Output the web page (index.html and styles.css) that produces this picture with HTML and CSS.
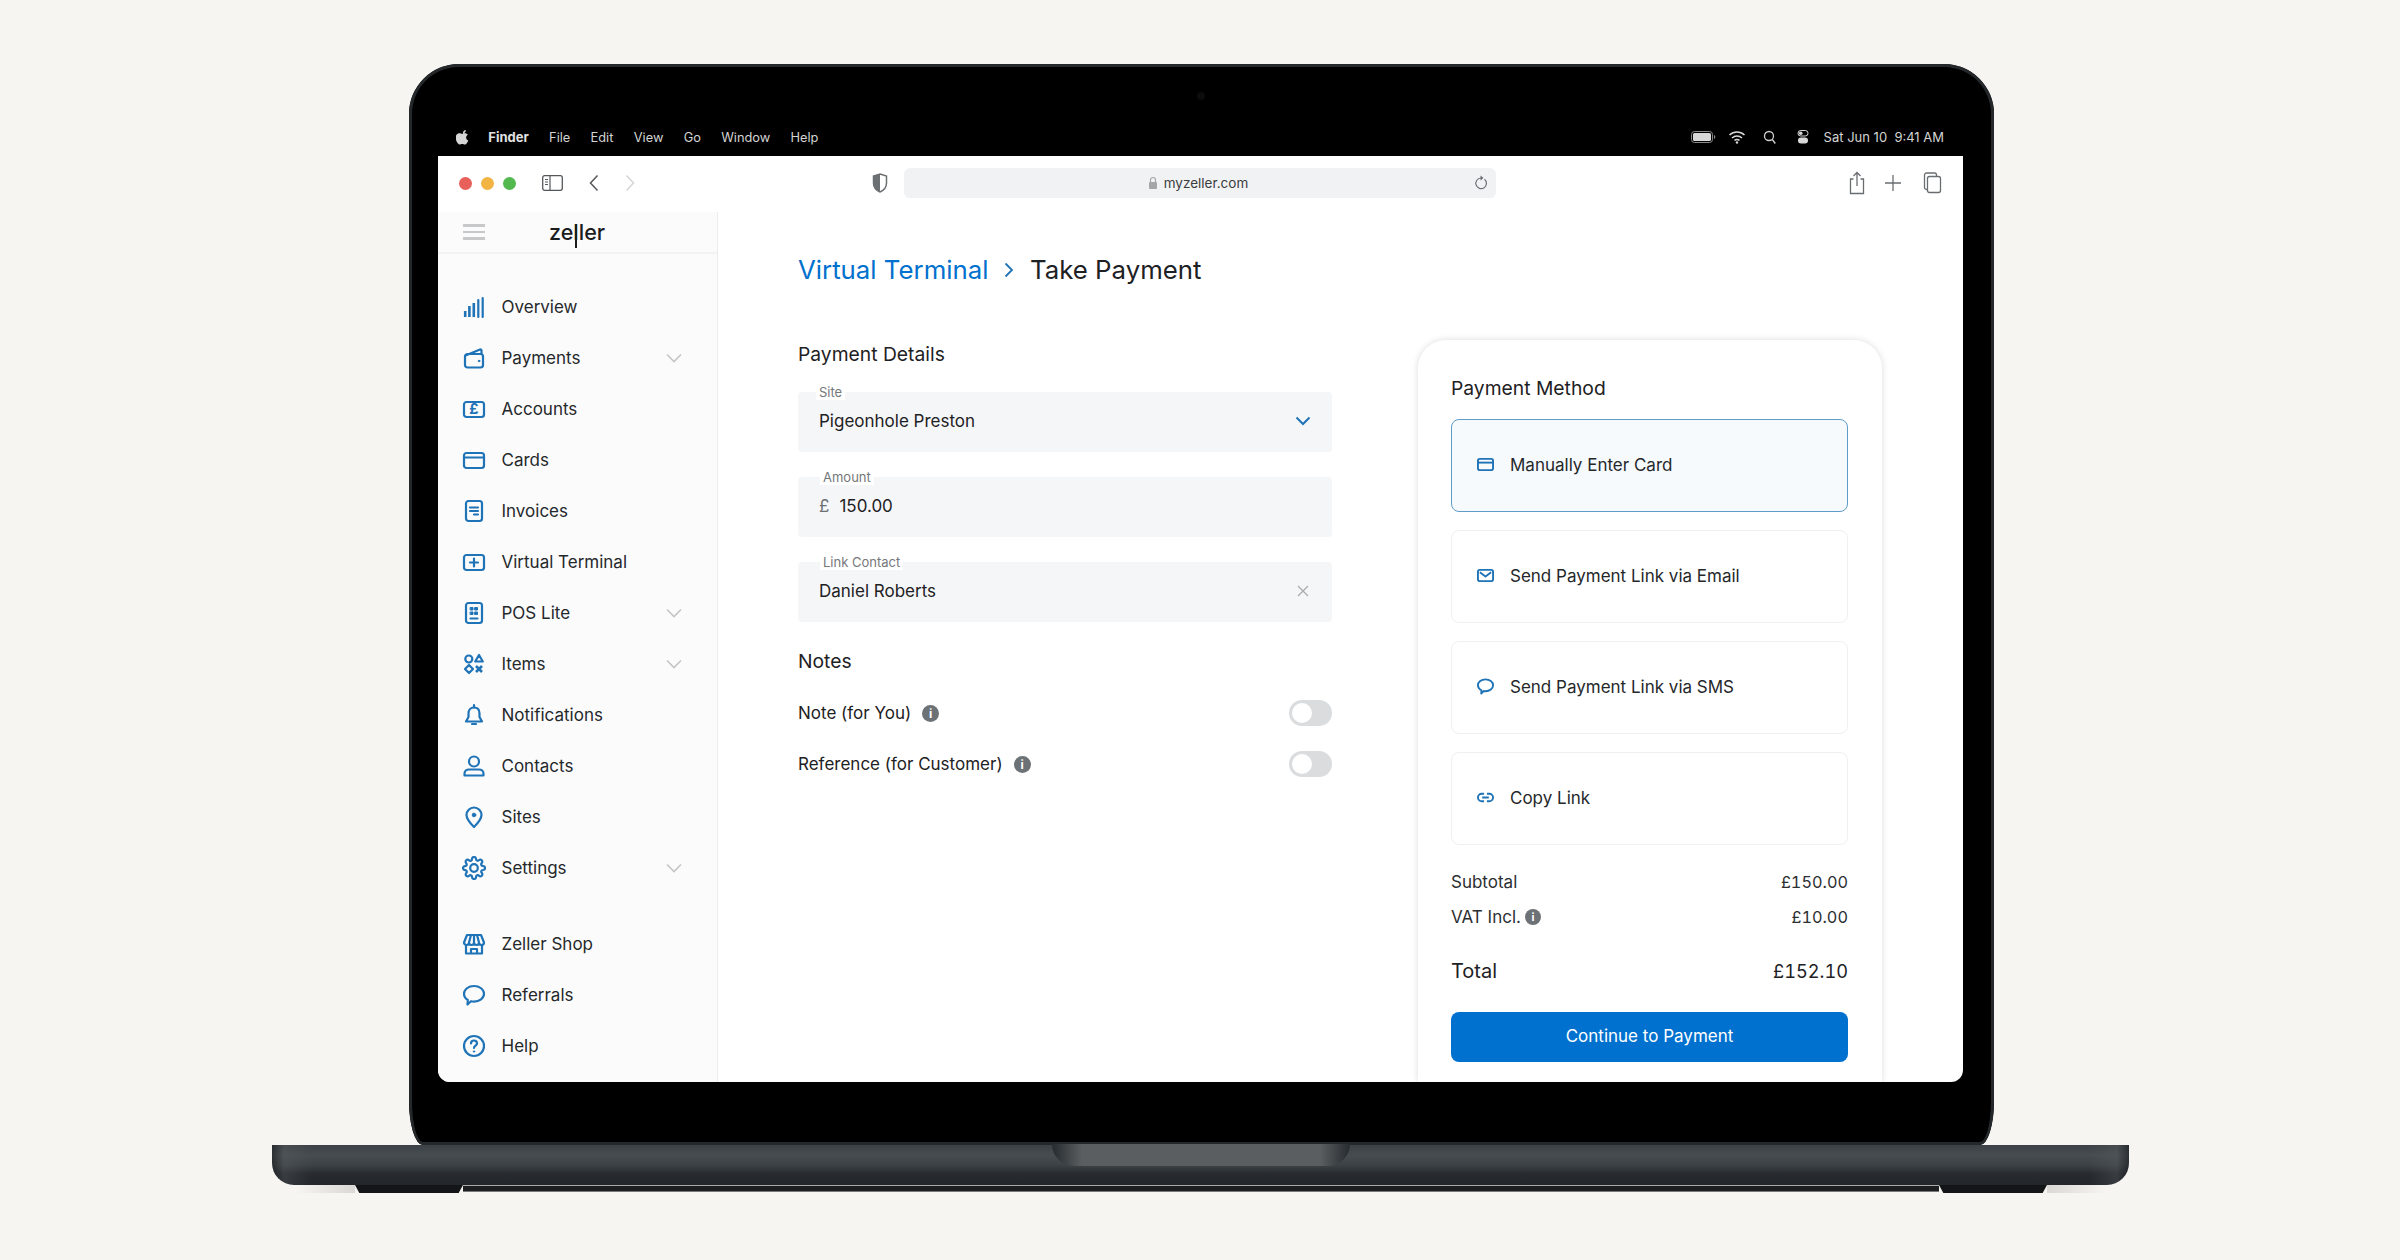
FILE: index.html
```html
<!DOCTYPE html>
<html lang="en">
<head>
  <meta charset="UTF-8">
  <meta name="viewport" content="width=device-width, initial-scale=1.0">
  <title>Zeller Virtual Terminal</title>
  <link rel="stylesheet" href="styles.css">
</head>
<body>
  <div class="stage">
    <!-- Laptop lid -->
    <div class="lid">
      <div class="camera"></div>
      <div class="screen">

        <!-- macOS menu bar -->
        <div class="menubar">
          <div class="menu-left">
            <svg class="apple" viewBox="0 0 16 18"><path d="M11.2 1c.1 1.1-.3 2-1 2.800-.6.700-1.500 1.200-2.400 1.100-.1-1 .4-2 1-2.700C9.400 1.500 10.400 1 11.200 1zM14 13.100c-.4.900-.6 1.300-1.100 2.100-.7 1.100-1.700 2.400-2.900 2.400-1.100 0-1.400-.7-2.900-.7s-1.800.7-2.900.7c-1.200 0-2.100-1.200-2.800-2.300C-.6 12.200-.8 8.600.4 6.800c.9-1.300 2.200-2 3.500-2s2.100.7 3.200.7c1 0 1.700-.7 3.200-.7 1.100 0 2.400.6 3.200 1.700-2.800 1.600-2.400 5.600.5 6.600z"/></svg>
            <span class="menu-app">Finder</span>
            <span>File</span>
            <span>Edit</span>
            <span>View</span>
            <span>Go</span>
            <span>Window</span>
            <span>Help</span>
          </div>
          <div class="menu-right">
            <svg class="battery" viewBox="0 0 25 12"><rect x="0.5" y="0.500" width="21" height="11" rx="3" fill="none" stroke="#8a8a8a"/><rect x="2" y="2" width="18" height="8" rx="1.500" fill="#d8d8d8"/><path d="M23 4v4c.8-.3 1.300-1 1.300-2S23.800 4.300 23 4z" fill="#8a8a8a"/></svg>
            <svg class="status-icon" viewBox="0 0 18 14"><path d="M1.500 5a11 11 0 0 1 15 0M4 8a7.500 7.500 0 0 1 10 0M6.500 10.500a3.500 3.500 0 0 1 5 0" fill="none" stroke="#d8d8d8" stroke-width="1.500"/><circle cx="9" cy="12.500" r="1.200" fill="#d8d8d8"/></svg>
            <svg class="status-icon" viewBox="0 0 18 14"><circle cx="8" cy="6" r="4.500" fill="none" stroke="#d0d0d0" stroke-width="1.300"/><path d="M11.300 9.500l3 4" stroke="#d0d0d0" stroke-width="1.300"/></svg>
            <svg class="status-icon" viewBox="0 0 18 14"><rect x="4" y="0.500" width="10" height="5.500" rx="2.700" fill="none" stroke="#d8d8d8"/><circle cx="6.700" cy="3.200" r="1.800" fill="#d8d8d8"/><rect x="4" y="7.500" width="10" height="6" rx="3" fill="#d8d8d8"/></svg>
            <span class="clock">Sat Jun 10&nbsp; 9:41 AM</span>
          </div>
        </div>

        <!-- Safari toolbar -->
        <div class="toolbar">
          <span class="dot dot-red"></span>
          <span class="dot dot-amber"></span>
          <span class="dot dot-green"></span>
          <svg class="tb-sidebar" viewBox="0 0 21 16"><rect x="0.700" y="0.700" width="19.600" height="14.600" rx="2" fill="none" stroke="#55585b" stroke-width="1.300"/><path d="M8 1v14M3 4.500h3M3 7h3M3 9.500h3" stroke="#55585b" stroke-width="1.200"/></svg>
          <svg class="tb-back" viewBox="0 0 10 18"><path d="M8.500 1.500L1.500 9l7 7.500" fill="none" stroke="#55585b" stroke-width="1.500"/></svg>
          <svg class="tb-forward" viewBox="0 0 10 18"><path d="M1.500 1.500L8.500 9l-7 7.500" fill="none" stroke="#d4d5d6" stroke-width="1.500"/></svg>
          <svg class="tb-shield" viewBox="0 0 16 20"><path d="M8 1l6.500 2v7c0 4.500-3 7.500-6.500 9-3.500-1.500-6.500-4.500-6.500-9V3z" fill="#fff" stroke="#6d7073" stroke-width="1.500"/><path d="M8 1L1.500 3v7c0 4.500 3 7.500 6.500 9z" fill="#6d7073"/></svg>
          <div class="urlbar">
            <span></span>
            <span class="url">
              <svg class="url-lock" viewBox="0 0 10 14"><path d="M2.500 6V4a2.500 2.500 0 0 1 5 0v2" fill="none" stroke="#a4a6a8" stroke-width="1.200"/><rect x="1" y="6" width="8" height="7" rx="1" fill="#a4a6a8"/></svg>
              myzeller.com
            </span>
            <svg class="url-reload" viewBox="0 0 14 16"><path d="M10.500 4.200A5.300 5.300 0 1 1 7 3" fill="none" stroke="#6d7073" stroke-width="1.200"/><path d="M6.500 0.500L9.500 3 6.500 5.500z" fill="#6d7073"/></svg>
          </div>
          <div class="tb-actions">
            <svg class="tb-action" viewBox="0 0 20 24"><path d="M6.500 8H3.500v14.500h13V8h-3M10 15V1.500M6.500 5L10 1.500 13.500 5" fill="none" stroke="#6a6d70" stroke-width="1.300"/></svg>
            <svg class="tb-action" viewBox="0 0 20 24"><path d="M10 4v16M2 12h16" fill="none" stroke="#6a6d70" stroke-width="1.300"/></svg>
            <svg class="tb-action tb-tabs" viewBox="0 0 20 24"><rect x="5.500" y="5.500" width="13" height="16" rx="2" fill="none" stroke="#6a6d70" stroke-width="1.300"/><path d="M5.500 18.500h-1a2 2 0 0 1-2-2V4a2 2 0 0 1 2-2h8a2 2 0 0 1 2 2v1.500" fill="none" stroke="#6a6d70" stroke-width="1.300"/></svg>
          </div>
        </div>

        <div class="app">
          <!-- Sidebar -->
          <aside class="sidebar">
            <div class="sidebar-head">
              <div class="hamburger"><span></span><span></span><span></span></div>
              <div class="logo">zeller</div>
            </div>
            <nav class="nav">
              <a class="nav-item">
                <svg class="nav-icon" viewBox="0 0 24 24"><path class="thick" d="M3.200 22v-6M7.400 22V11M11.800 22V8"/><path d="M16.300 22V5M20.700 22V3"/></svg>
                Overview
              </a>
              <a class="nav-item">
                <svg class="nav-icon" viewBox="0 0 24 24"><rect x="3" y="8" width="18" height="13.500" rx="2.500"/><path d="M3.500 9.500L18 3.500c.8-.3 1.500.3 1.500 1.200V8"/><circle class="solid" cx="17" cy="15" r="0.800"/></svg>
                Payments
                <svg class="nav-chevron" viewBox="0 0 16 10"><path d="M1 1.500l7 7 7-7"/></svg>
              </a>
              <a class="nav-item">
                <svg class="nav-icon" viewBox="0 0 24 24"><rect x="2" y="5" width="20" height="15" rx="2.500"/><text class="icon-glyph" x="12" y="17.400" text-anchor="middle">£</text></svg>
                Accounts
              </a>
              <a class="nav-item">
                <svg class="nav-icon" viewBox="0 0 24 24"><rect x="2" y="5" width="20" height="15" rx="2.500"/><path d="M2 9.500h20"/></svg>
                Cards
              </a>
              <a class="nav-item">
                <svg class="nav-icon" viewBox="0 0 24 24"><rect x="4" y="2" width="16" height="20" rx="2.500"/><path d="M8 8.500h8M8 12h8M12 15.500h4"/></svg>
                Invoices
              </a>
              <a class="nav-item">
                <svg class="nav-icon" viewBox="0 0 24 24"><rect x="2" y="5" width="20" height="15" rx="2.500"/><path d="M12 8.500v8M8 12.500h8"/></svg>
                Virtual Terminal
              </a>
              <a class="nav-item">
                <svg class="nav-icon" viewBox="0 0 24 24"><rect x="4" y="2" width="16" height="20" rx="2.500"/><path class="solid" d="M8.500 6.500h2.500v2.500h-2.500zM13 6.500h2.500v2.500H13zM8.500 11h2.500v2.500h-2.500zM13 11h2.500v2.500H13z"/><path d="M8.500 17.500h7"/></svg>
                POS Lite
                <svg class="nav-chevron" viewBox="0 0 16 10"><path d="M1 1.500l7 7 7-7"/></svg>
              </a>
              <a class="nav-item">
                <svg class="nav-icon" viewBox="0 0 24 24"><circle cx="6.800" cy="7" r="3.500"/><path d="M17 3l3.800 6.500h-7.600z"/><path d="M7 13l4 4-4 4-4-4z"/><path class="thick" d="M14 14l6 6M20 14l-6 6"/></svg>
                Items
                <svg class="nav-chevron" viewBox="0 0 16 10"><path d="M1 1.500l7 7 7-7"/></svg>
              </a>
              <a class="nav-item">
                <svg class="nav-icon" viewBox="0 0 24 24"><path d="M12 4.500c-3.500 0-5.500 2.500-5.500 6v3.500L4 18.500h16L17.500 14v-3.500c0-3.500-2-6-5.500-6z"/><path d="M12 2v2.500M10 21h4"/></svg>
                Notifications
              </a>
              <a class="nav-item">
                <svg class="nav-icon" viewBox="0 0 24 24"><circle cx="12" cy="7.500" r="5"/><path d="M2.500 21.500v-1.800c0-2.500 2-4.200 4.500-4.200h10c2.500 0 4.500 1.700 4.500 4.200v1.800z"/></svg>
                Contacts
              </a>
              <a class="nav-item">
                <svg class="nav-icon" viewBox="0 0 24 24"><path d="M12 22c-4-4-7.500-8-7.500-12a7.500 7.500 0 0 1 15 0c0 4-3.500 8-7.500 12z"/><circle class="solid" cx="12" cy="10" r="1.800"/></svg>
                Sites
              </a>
              <a class="nav-item">
                <svg class="nav-icon" viewBox="0 0 24 24"><circle cx="12" cy="12" r="3.800"/><path d="M19.400 15a1.650 1.650 0 0 0 .33 1.820l.06.06a2 2 0 0 1 0 2.830 2 2 0 0 1-2.830 0l-.06-.06a1.650 1.650 0 0 0-1.820-.33 1.650 1.650 0 0 0-1 1.510V21a2 2 0 0 1-2 2 2 2 0 0 1-2-2v-.09A1.650 1.650 0 0 0 9 19.400a1.650 1.650 0 0 0-1.820.33l-.06.06a2 2 0 0 1-2.830 0 2 2 0 0 1 0-2.830l.06-.06a1.650 1.650 0 0 0 .33-1.820 1.650 1.650 0 0 0-1.510-1H3a2 2 0 0 1-2-2 2 2 0 0 1 2-2h.09A1.650 1.650 0 0 0 4.600 9a1.650 1.650 0 0 0-.33-1.820l-.06-.06a2 2 0 0 1 0-2.830 2 2 0 0 1 2.830 0l.06.06a1.650 1.650 0 0 0 1.820.33H9a1.650 1.650 0 0 0 1-1.510V3a2 2 0 0 1 2-2 2 2 0 0 1 2 2v.09a1.650 1.650 0 0 0 1 1.510 1.650 1.650 0 0 0 1.820-.33l.06-.06a2 2 0 0 1 2.830 0 2 2 0 0 1 0 2.830l-.06.06a1.650 1.650 0 0 0-.33 1.820V9a1.650 1.650 0 0 0 1.510 1H21a2 2 0 0 1 2 2 2 2 0 0 1-2 2h-.09a1.650 1.650 0 0 0-1.510 1z"/></svg>
                Settings
                <svg class="nav-chevron" viewBox="0 0 16 10"><path d="M1 1.500l7 7 7-7"/></svg>
              </a>
              <div class="nav-gap"></div>
              <a class="nav-item">
                <svg class="nav-icon" viewBox="0 0 24 24"><path d="M5 3h14l3 7.500a2.500 2.500 0 0 1-5 0 2.500 2.500 0 0 1-5 0 2.500 2.500 0 0 1-5 0 2.500 2.500 0 0 1-5 0zM9 3L7 10.500M15 3l2 7.500M12 3v7.500"/><path d="M4 13v8.500h16V13M9 21.500V17h6v4.500"/></svg>
                Zeller Shop
              </a>
              <a class="nav-item">
                <svg class="nav-icon" viewBox="0 0 24 24"><path d="M12 3c5.500 0 10 3.400 10 7.800s-4.500 7.800-10 7.800c-1 0-2-.1-3-.4L5.500 21.500l.3-4.500C3.400 15.600 2 13.300 2 10.800 2 6.400 6.500 3 12 3z"/></svg>
                Referrals
              </a>
              <a class="nav-item">
                <svg class="nav-icon" viewBox="0 0 24 24"><circle cx="12" cy="12" r="10"/><path d="M9 9.500A3 3 0 0 1 15 9.500c0 2-3 2.300-3 4.500"/><circle class="solid" cx="12" cy="17.500" r="0.700"/></svg>
                Help
              </a>
            </nav>
          </aside>

          <!-- Main content -->
          <main class="main">
            <div class="breadcrumb">
              <span class="crumb-link">Virtual Terminal</span>
              <svg class="crumb-sep" viewBox="0 0 10 16"><path d="M1.500 1.500L8 8l-6.500 6.500"/></svg>
              <span>Take Payment</span>
            </div>

            <div class="columns">
              <section class="details">
                <h2 class="section-title">Payment Details</h2>

                <div class="field field-first">
                  <label class="field-label field-label-site">Site</label>
                  <span>Pigeonhole Preston</span>
                  <svg class="field-chevron" viewBox="0 0 16 10"><path d="M1.500 1.500L8 8l6.500-6.500"/></svg>
                </div>
                <div class="field">
                  <label class="field-label">Amount</label>
                  <span class="currency">£</span>
                  <span>150.00</span>
                </div>
                <div class="field">
                  <label class="field-label">Link Contact</label>
                  <span>Daniel Roberts</span>
                  <svg class="field-clear" viewBox="0 0 12 12"><path d="M1 1l10 10M11 1L1 11"/></svg>
                </div>

                <h2 class="section-title notes-title">Notes</h2>
                <div class="note-row">
                  <span>Note (for You)</span>
                  <span class="info">i</span>
                  <span class="toggle"></span>
                </div>
                <div class="note-row">
                  <span>Reference (for Customer)</span>
                  <span class="info">i</span>
                  <span class="toggle"></span>
                </div>
              </section>

              <section class="method-card">
                <h2 class="section-title method-title">Payment Method</h2>
                <div class="options">
                  <div class="option option-active">
                    <svg class="option-icon" viewBox="0 0 18 14"><rect x="1" y="1" width="16" height="12" rx="2"/><path d="M1 5h16"/></svg>
                    Manually Enter Card
                  </div>
                  <div class="option">
                    <svg class="option-icon" viewBox="0 0 18 14"><rect x="1" y="1" width="16" height="12" rx="2"/><path d="M3 3.500l6 4.500 6-4.500"/></svg>
                    Send Payment Link via Email
                  </div>
                  <div class="option">
                    <svg class="option-icon" viewBox="0 0 18 17"><path d="M9 1c4.400 0 8 2.700 8 6.300s-3.600 6.200-8 6.200c-.7 0-1.400-.1-2-.2L4.500 16l.2-3.500C2.500 11.400 1 9.500 1 7.300 1 3.700 4.600 1 9 1z"/></svg>
                    Send Payment Link via SMS
                  </div>
                  <div class="option">
                    <svg class="option-icon" viewBox="0 0 18 12"><path d="M7.500 2H5a4 4 0 0 0 0 8h2.500M10.500 2H13a4 4 0 0 1 0 8h-2.500M5.500 6h7"/></svg>
                    Copy Link
                  </div>
                </div>

                <div class="summary-row summary-first"><span>Subtotal</span><span class="money">£150.00</span></div>
                <div class="summary-row"><span class="vat">VAT Incl. <span class="info info-small">i</span></span><span class="money">£10.00</span></div>
                <div class="summary-row summary-total"><span>Total</span><span class="money">£152.10</span></div>

                <button class="btn-continue" type="button">Continue to Payment</button>
              </section>
            </div>
          </main>
        </div>
      </div>
    </div>

    <!-- Laptop base -->
    <div class="base">
      <div class="base-notch"></div>
    </div>
    <div class="base-under">
      <div class="under-shadow"></div>
      <div class="foot"></div>
      <div class="under-strip"></div>
      <div class="foot"></div>
      <div class="under-shadow under-shadow-right"></div>
    </div>
  </div>
</body>
</html>
```

FILE: styles.css
```css
/* Global reset */
* {
  margin: 0;
  padding: 0;
  box-sizing: border-box;
}

body {
  font-family: 'Inter', 'Liberation Sans', sans-serif;
  background-color: #f6f5f1;
  color: #1e2124;
  height: 1260px;
  overflow: hidden;
}

.stage {
  padding: 64px 0 0 272px;
}

/* Laptop lid */
.lid {
  position: relative;
  width: 1585px;
  height: 1081px;
  margin-left: 137px;
  padding: 56px 31px 63px 29px;
  background-color: #000;
  border-radius: 50px 50px 14px 14px / 50px 50px 44px 44px;
  box-shadow: inset 0 0 0 3px #25282b;
}

.camera {
  position: absolute;
  top: 28px;
  left: 788px;
  width: 8px;
  height: 8px;
  border-radius: 50%;
  background-color: #0b0c0e;
}

.screen {
  height: 100%;
  display: flex;
  flex-direction: column;
  background-color: #fff;
  border-radius: 0 0 12px 12px;
  overflow: hidden;
}

/* Menu bar */
.menubar {
  height: 36px;
  flex-shrink: 0;
  display: flex;
  align-items: center;
  justify-content: space-between;
  padding: 0 19px 2px 18px;
  background-color: #000;
  color: #d4d4d4;
  font-size: 12.800px;
}

.menu-left {
  display: flex;
  align-items: center;
  gap: 20.300px;
}

.menu-app {
  font-weight: 700;
  font-size: 13px;
  color: #e2e2e2;
}

.apple {
  width: 14px;
  height: 16px;
  margin-right: -2px;
  fill: #d6d6d6;
}

.menu-right {
  display: flex;
  align-items: center;
  gap: 14px;
}

.battery {
  width: 25px;
  height: 12px;
  margin-right: -3px;
}

.status-icon {
  width: 18px;
  height: 14px;
  margin-left: 1px;
}

.clock {
  margin-left: -2px;
  font-size: 13px;
}

/* Safari toolbar */
.toolbar {
  height: 56px;
  flex-shrink: 0;
  display: flex;
  align-items: center;
  padding: 0 21px 2px;
  background-color: #fff;
}

.dot {
  width: 13px;
  height: 13px;
  margin-right: 9px;
  border-radius: 50%;
}

.dot-red { background-color: #e8605a; }
.dot-amber { background-color: #f2b544; }
.dot-green { background-color: #53b94f; }

.tb-sidebar {
  width: 21px;
  height: 16px;
  margin-left: 17px;
}

.tb-back,
.tb-forward {
  width: 10px;
  height: 18px;
}

.tb-back { margin-left: 26px; }
.tb-forward { margin-left: 26px; }

.tb-shield {
  width: 16px;
  height: 20px;
  margin-left: 237px;
}

.urlbar {
  width: 592px;
  height: 30px;
  margin-left: 16px;
  display: grid;
  grid-template-columns: 1fr auto 1fr;
  align-items: center;
  padding: 0 8px 0 4px;
  background-color: #f1f2f4;
  border-radius: 6px;
}

.url {
  display: flex;
  align-items: center;
  gap: 6px;
  color: #3a3d40;
  font-size: 13.500px;
}

.url-lock {
  width: 10px;
  height: 14px;
}

.url-reload {
  width: 14px;
  height: 16px;
  justify-self: end;
}

.tb-actions {
  margin-left: auto;
  display: flex;
  gap: 16px;
}

.tb-action {
  width: 20px;
  height: 24px;
}

.tb-tabs {
  margin-left: 3px;
}

/* App area */
.app {
  flex: 1;
  min-height: 0;
  display: flex;
}

/* Sidebar */
.sidebar {
  width: 280px;
  flex-shrink: 0;
  background-color: #fbfbfb;
  border-right: 1px solid #ececec;
}

.sidebar-head {
  position: relative;
  height: 42px;
  display: flex;
  align-items: center;
  padding-left: 25px;
  border-bottom: 2px solid #f2f2f2;
}

.hamburger {
  width: 22px;
  display: flex;
  flex-direction: column;
  gap: 4px;
}

.hamburger span {
  height: 2.500px;
  background-color: #c6c8c9;
}

.logo {
  position: relative;
  margin-left: 64px;
  color: #1a1c1e;
  font-size: 21.500px;
  font-weight: 500;
  line-height: 26px;
}

/* long stem of the logo's first l */
.logo::after {
  content: "";
  position: absolute;
  top: 5px;
  bottom: -3px;
  left: 26px;
  width: 1.500px;
  background-color: #1a1c1e;
}

.nav {
  padding-top: 27.500px;
}

.nav-item {
  height: 51px;
  display: flex;
  align-items: center;
  gap: 15.500px;
  padding: 0 35px 0 24px;
  color: #25282b;
  font-size: 17px;
}

.nav-gap {
  height: 25px;
}

.nav-icon {
  width: 24px;
  height: 24px;
  flex-shrink: 0;
  fill: none;
  stroke: #1f73b7;
  stroke-width: 2.200;
  stroke-linejoin: round;
  stroke-linecap: round;
}

.nav-icon .solid {
  fill: #1f73b7;
  stroke-width: 1;
}

.nav-icon .thick {
  stroke-width: 2.600;
  stroke-linecap: butt;
}

.icon-glyph {
  fill: #1f73b7;
  stroke: none;
  font-size: 14.500px;
  font-weight: 700;
}

.nav-chevron {
  width: 16px;
  height: 10px;
  margin-left: auto;
  fill: none;
  stroke: #c3c5c7;
  stroke-width: 1.600;
}

/* Main content */
.main {
  flex: 1;
  min-width: 0;
  padding: 42px 81px 0 80px;
}

.breadcrumb {
  height: 32px;
  padding-bottom: 1px;
  display: flex;
  align-items: center;
  font-size: 25.800px;
  color: #1e2124;
}

.crumb-link {
  color: #0071ce;
}

.crumb-sep {
  width: 10px;
  height: 16px;
  margin: 0 16px 0 15.500px;
  fill: none;
  stroke: #1f73b7;
  stroke-width: 1.800;
}

.columns {
  margin-top: 54px;
  display: grid;
  grid-template-columns: 534px 464px;
  justify-content: space-between;
}

.section-title {
  height: 28px;
  font-size: 19.300px;
  font-weight: 400;
  line-height: 28px;
}

/* Form fields */
.field {
  position: relative;
  height: 60px;
  margin-top: 25px;
  padding: 0 21px 2px;
  display: flex;
  align-items: center;
  gap: 8px;
  background-color: #f5f6f8;
  border-radius: 4px;
  font-size: 17px;
}

.field-first {
  margin-top: 24px;
}

.field-label {
  position: absolute;
  top: -8px;
  left: 22px;
  padding: 0 3px;
  color: #75787b;
  font-size: 13px;
  line-height: 16px;
  background-color: #fff;
}

.field-label-site {
  left: 18px;
}

.currency {
  margin-right: 2px;
  color: #6d7073;
}

.field-chevron {
  width: 16px;
  height: 10px;
  margin-left: auto;
  fill: none;
  stroke: #1f73b7;
  stroke-width: 2;
}

.field-clear {
  width: 12px;
  height: 12px;
  margin-left: auto;
  margin-right: 2px;
  fill: none;
  stroke: #a9abad;
  stroke-width: 1.300;
}

/* Notes */
.notes-title {
  margin-top: 25px;
  margin-bottom: 1px;
}

.note-row {
  height: 26px;
  margin-top: 25px;
  display: flex;
  align-items: center;
  gap: 11px;
  font-size: 17px;
}

.info {
  width: 17px;
  height: 17px;
  flex-shrink: 0;
  display: inline-flex;
  align-items: center;
  justify-content: center;
  background-color: #6d7276;
  border-radius: 50%;
  color: #fff;
  font-size: 12px;
  font-weight: 700;
}

.toggle {
  position: relative;
  width: 43px;
  height: 26px;
  margin-left: auto;
  background-color: #dadcde;
  border-radius: 13px;
}

.toggle::before {
  content: "";
  position: absolute;
  top: 3px;
  left: 3px;
  width: 20px;
  height: 20px;
  background-color: #fff;
  border-radius: 50%;
}

/* Payment method card */
.method-card {
  height: 742px;
  padding: 34px 34px 0 33px;
  background-color: #fff;
  border-radius: 28px 28px 0 0;
  box-shadow: 0 0 7px rgba(0, 0, 0, 0.14);
}

.method-title {
  margin-bottom: 17px;
}

.options {
  display: flex;
  flex-direction: column;
  gap: 18px;
}

.option {
  height: 93px;
  display: flex;
  align-items: center;
  gap: 16px;
  padding: 0 0 2px 25px;
  border: 1px solid #eff0f1;
  border-radius: 8px;
  color: #25282b;
  font-size: 17px;
}

.option-active {
  background-color: #f6fafd;
  border-color: #5f9dc9;
  border-width: 1.500px;
}

.option-icon {
  width: 17px;
  height: 17px;
  flex-shrink: 0;
  fill: none;
  stroke: #1f73b7;
  stroke-width: 2;
  stroke-linejoin: round;
}

.summary-row {
  height: 28px;
  margin-top: 7px;
  display: flex;
  align-items: center;
  justify-content: space-between;
  font-size: 17px;
  color: #2c2f32;
}

.summary-first {
  margin-top: 23px;
}

.summary-total {
  margin-top: 26px;
  color: #1e2124;
  font-size: 20px;
}

.money {
  font-size: 16.300px;
  font-variant-numeric: tabular-nums;
}

.summary-total .money {
  font-size: 18.200px;
}

.vat {
  display: flex;
  align-items: center;
  gap: 4px;
}

.info-small {
  width: 16px;
  height: 16px;
  font-size: 11px;
}

.btn-continue {
  width: 100%;
  height: 50px;
  margin-top: 27px;
  padding-bottom: 2px;
  border: none;
  border-radius: 8px;
  background-color: #0071ce;
  color: #fff;
  font-family: inherit;
  font-size: 17px;
}

/* Laptop base */
.base {
  position: relative;
  width: 1857px;
  height: 40px;
  background:
    linear-gradient(90deg, rgba(20, 22, 25, 0.5) 0, rgba(90, 95, 98, 0.35) 12px, rgba(0, 0, 0, 0) 40px, rgba(0, 0, 0, 0) 1817px, rgba(90, 95, 98, 0.35) 1845px, rgba(20, 22, 25, 0.5) 100%),
    linear-gradient(180deg, #3b4146 0, #474c50 25%, #3d4246 50%, #272b30 72%, #23272b 100%);
  border-radius: 0 0 22px 22px;
}

.base-notch {
  position: absolute;
  top: -1px;
  left: 780px;
  width: 298px;
  height: 22px;
  background: linear-gradient(90deg, #262b2f 0, #5a5e61 10%, #5a5e61 90%, #262b2f 100%);
  border-radius: 0 0 22px 22px;
}

.base-under {
  width: 1811px;
  height: 8px;
  margin-left: 24px;
  display: flex;
}

.under-shadow {
  width: 59px;
  background: linear-gradient(90deg, #f6f5f1, #d9d8d4);
}

.under-shadow-right {
  width: 60px;
  background: linear-gradient(90deg, #d9d8d4, #f6f5f1);
}

.foot {
  width: 108px;
  height: 8px;
  background-color: #141517;
  clip-path: polygon(0 0, 100% 0, 96% 100%, 4% 100%);
}

.under-strip {
  flex: 1;
  height: 7px;
  background-color: #1d1e1f;
  border-top: 1px solid #a9a9a6;
  border-bottom: 1px solid #77787a;
}
```
